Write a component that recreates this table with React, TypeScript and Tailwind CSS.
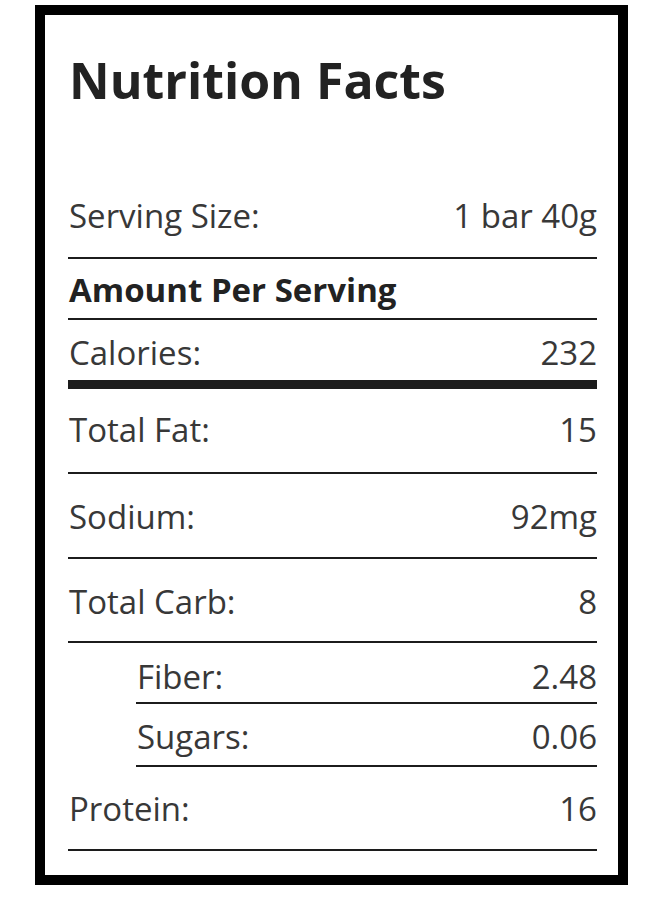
type Row = {
  label: string
  value?: string
  bold?: boolean
  sub?: boolean
  pad: string
  line: string
}

const rows: Row[] = [
  { label: 'Serving Size:', value: '1 bar 40g', pad: 'pt-0 pb-[25px]', line: 'border-b-2' },
  { label: 'Amount Per Serving', bold: true, pad: 'pt-[14px] pb-[12px]', line: 'border-b-2' },
  { label: 'Calories:', value: '232', pad: 'pt-[16px] pb-[11px]', line: 'border-b-[9px]' },
  { label: 'Total Fat:', value: '15', pad: 'pt-[24px] pb-[26px]', line: 'border-b-2' },
  { label: 'Sodium:', value: '92mg', pad: 'pt-[26px] pb-[24px]', line: 'border-b-2' },
  { label: 'Total Carb:', value: '8', pad: 'pt-[26px] pb-[23px]', line: 'border-b-2' },
  { label: 'Fiber:', value: '2.48', sub: true, pad: 'pt-[17px] pb-[9px]', line: 'border-b-2' },
  { label: 'Sugars:', value: '0.06', sub: true, pad: 'pt-[16px] pb-[12px]', line: 'border-b-2' },
  { label: 'Protein:', value: '16', pad: 'pt-[25px] pb-[24px]', line: 'border-b-2' },
]

export default function App() {
  return (
    <div className="min-h-[900px] w-[660px] bg-white pt-[5px] pl-[35px] font-['Open_Sans',sans-serif]">
      <div className="box-border h-[880px] w-[593px] border-[10px] border-black bg-white pl-[23px] pr-[21px] pt-[40px]">
        {/* Title */}
        <h1 className="mb-[94px] pl-[1px] text-[50px] leading-none font-bold text-[#222]">Nutrition Facts</h1>

        {/* Rows */}
        <div className="flex flex-col">
          {rows.map((row) => (
            <div
              key={row.label}
              className={`flex items-start justify-between border-[#1c1c1c] text-[33px] leading-[33px] text-[#383838] ${row.pad} ${row.line} ${row.sub ? 'ml-[68px]' : ''}`}
            >
              <span className={row.bold ? 'pl-[1px] text-[33px] font-bold text-[#222]' : 'pl-[1px]'}>{row.label}</span>
              {row.value && <span>{row.value}</span>}
            </div>
          ))}
        </div>
      </div>
    </div>
  )
}
